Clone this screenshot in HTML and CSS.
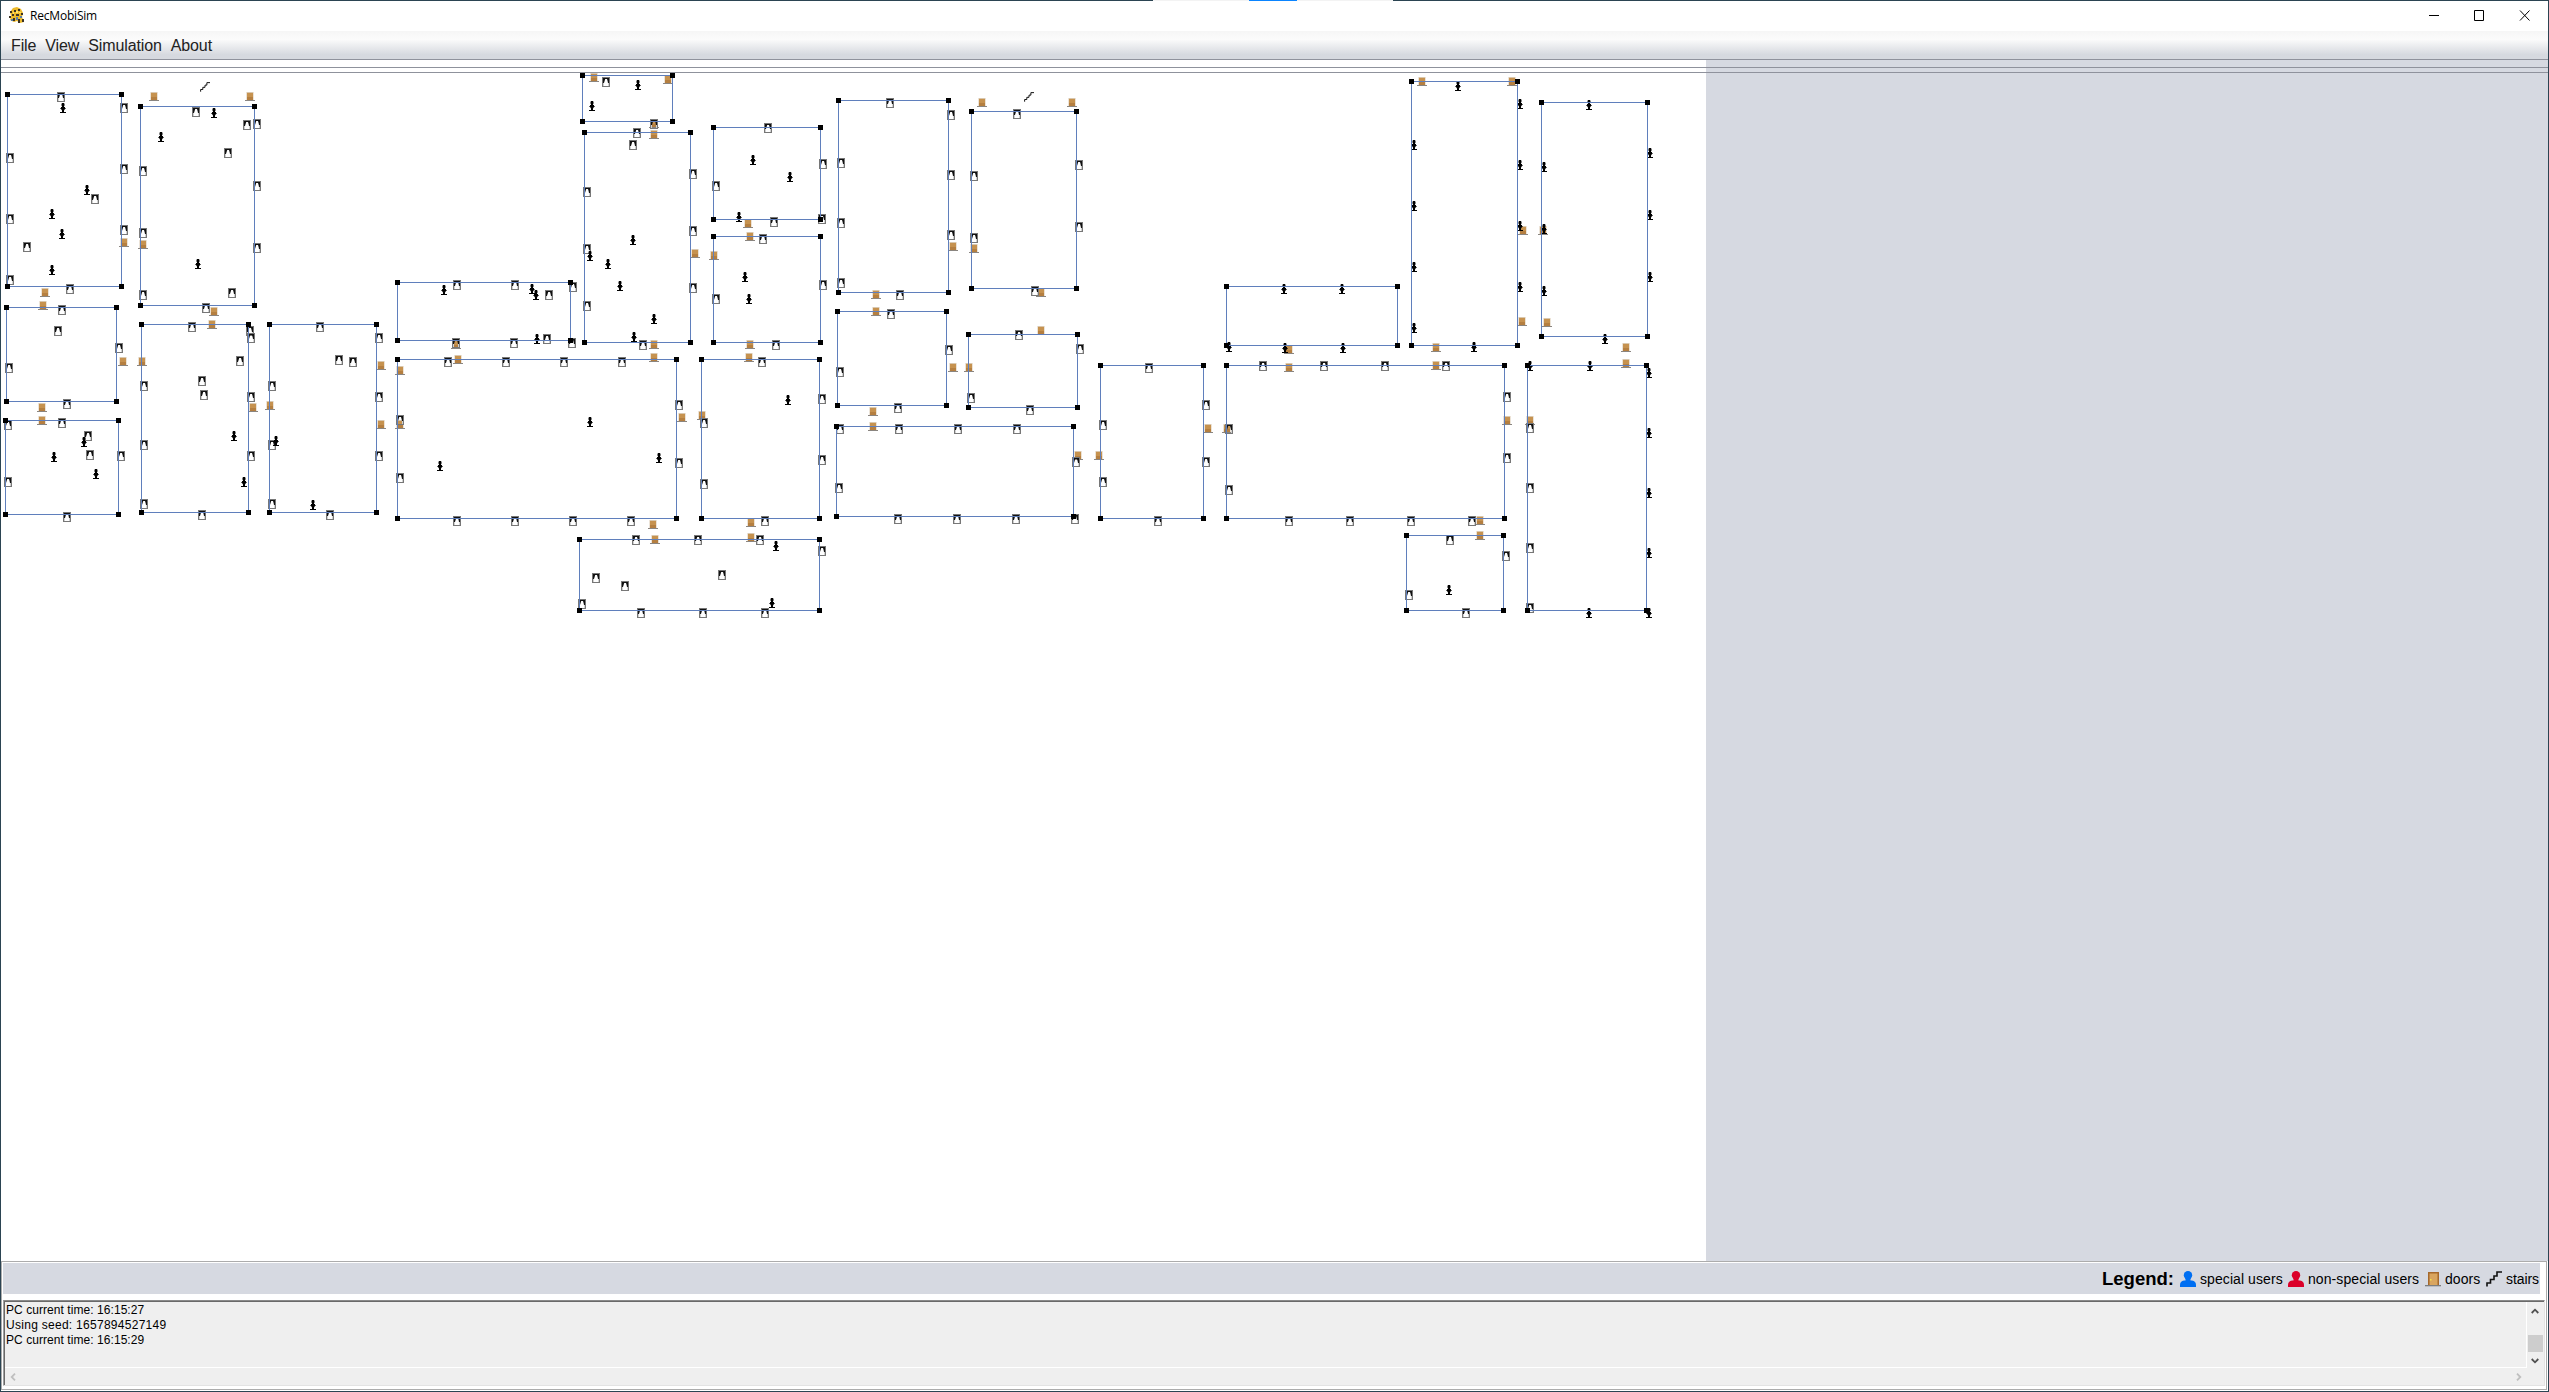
FILE: index.html
```html
<!DOCTYPE html>
<html lang="en">
<head>
<meta charset="utf-8">
<title>RecMobiSim</title>
<link rel="stylesheet" href="styles.css">
</head>
<body>
<svg class="defs" width="0" height="0">
  <symbol id="item" viewBox="0 0 8 10">
    <path fill="#d0d0d0" d="M1 1h1v8H1zM6 1h1v8H6z"/>
    <path fill="#777" fill-rule="evenodd" d="M0 0h8v10H0zM1 1v8h6V1z"/>
    <path fill="#111" d="M1 1h6v5H6L5.6 4 5 2H3.200L2.600 4 2 6H1z"/>
  </symbol>
  <symbol id="pawn" viewBox="0 0 6 10">
    <path d="M2 0h2l.5 1v1.500L4 3.500v.5h1v1h.6v1H5l-1 1.500V9h2v1H0V9h2V7.500L1 6H.4V5H1V4h1v-.5l-.5-1V1z"/>
  </symbol>
  <symbol id="door" viewBox="0 0 10 9">
    <path fill="#d9c7ae" d="M1.500 0h7v8h-7z"/>
    <path fill="#c6924f" d="M2 1h6v7H2z"/>
    <path fill="#b57f40" d="M2 5h6v3H2z"/>
    <path fill="#8a8580" d="M0 8h10v1H0z"/>
  </symbol>
  <symbol id="stairs" viewBox="0 0 16 16">
    <path fill="none" stroke="#111" stroke-width="1.600" d="M1 15.500V12h3.500V8.500H8V5h3V1h5"/>
  </symbol>
  <symbol id="user" viewBox="0 0 16 16">
    <circle cx="8" cy="4.200" r="4.200"/>
    <path d="M0 16v-2q0-4 4-4.600h8q4 .6 4 4.600v2zM5.500 7h5v4h-5z"/>
  </symbol>
</svg>
<div class="window">
  <header class="titlebar">
    <svg class="app-icon" viewBox="0 0 16 16">
      <path fill="#ecb92a" d="M4 1l4-1 4 2 2 4-1 4 2 5-4 1-3-2-3 1-4-2 1-4-1-4z"/>
      <path fill="#3a3226" d="M1 4h2v2H1zM5 3h2v2H5zM9 2h2v2H9zM3 7h2v2H3zM0 9h2v2H0zM7 7h3v2H7zM12 6h2v2h-2zM4 11h2v3H4zM9 12h2v4H9zM13 12h2v3h-2z"/>
      <path fill="#5b7fa8" d="M7 10h2v3H7zM2 12h2v2H2zM11 9h2v2h-2z"/>
      <path fill="#ffe36b" d="M7 4h2v2H7zM4 5h1v2H4zM10 5h2v1h-2z"/>
    </svg>
    <span class="app-title">RecMobiSim</span>
    <svg class="win-buttons" viewBox="0 0 102 12">
      <path fill="none" stroke="#000" d="M0 5.500h10M45.500 .5h9v10h-9zM91 .5l9.500 10M100.500 .5L91 10.500"/>
    </svg>
  </header>
  <nav class="menubar">
    <span>File</span><span>View</span><span>Simulation</span><span>About</span>
  </nav>
  <main class="workspace">
    <div class="toolbar"></div>
    <svg class="plan" id="plan" viewBox="1 71 1705 1190" width="1705" height="1190"></svg>
  </main>
  <section class="bottom">
    <div class="legend">
      <b>Legend:</b>
      <svg class="blue"><use href="#user"/></svg><span class="special">special users</span>
      <svg class="red"><use href="#user"/></svg><span class="regular">non-special users</span>
      <svg viewBox="0 0 16 16">
        <path fill="#a5682b" d="M3 1h11v13H3z"/><path fill="#d9a55f" d="M4.500 2.500h8V14h-8z"/>
        <path fill="#f5e34a" d="M5 8h1.500v1.500H5z"/><path fill="#7d7d7d" d="M0 14h16v1.300H0z"/>
      </svg><span class="exits">doors</span>
      <svg><use href="#stairs"/></svg><span class="steps">stairs</span>
    </div>
    <div class="console">
      <div class="log">
        <p>PC current time: 16:15:27</p>
        <p class="seed">Using seed: 1657894527149</p>
        <p>PC current time: 16:15:29</p>
      </div>
      <div class="vscroll">
        <svg viewBox="0 0 8 6"><path d="M.7 5L4 1.700 7.300 5"/></svg>
        <i class="thumb"></i>
        <svg viewBox="0 0 8 6"><path d="M.7 1L4 4.300 7.300 1"/></svg>
      </div>
      <div class="hscroll">
        <svg viewBox="0 0 6 8"><path d="M5 .7L1.700 4 5 7.300"/></svg>
        <svg viewBox="0 0 6 8"><path d="M1 .7L4.300 4 1 7.300"/></svg>
      </div>
      <div class="corner"></div>
    </div>
  </section>
</div>
<div class="tab-strip"><i></i></div>
<script src="script.js"></script>
</body>
</html>
```
FILE: styles.css
```css
* { box-sizing: border-box; }
html { height: 1392px; overflow: hidden; }
body {
  margin: 0;
  width: 2549px;
  height: 1392px;
  overflow: hidden;
  font-family: "Liberation Sans", Arial, sans-serif;
  color: #000;
}
.defs { position: absolute; }
.window {
  width: 2549px;
  height: 1392px;
  border: 1px solid #2b4452;
  background: #fff;
  display: flex;
  flex-direction: column;
}
.tab-strip {
  position: absolute;
  top: 0;
  left: 1153px;
  width: 240px;
  height: 1px;
  background: #f3f3f3;
  display: flex;
  justify-content: center;
}
.tab-strip i { width: 48px; background: #0a84ff; }

.titlebar {
  height: 30px;
  display: flex;
  align-items: center;
  padding: 0 17px 2px 8px;
}
.app-icon { width: 16px; height: 16px; margin-right: 5px; }
.app-title { font: 12px "Open Sans", "Noto Sans", sans-serif; letter-spacing: -0.2px; }
.win-buttons { width: 102px; height: 12px; margin: 2px 0 0 auto; }

.menubar {
  height: 29px;
  border-bottom: 1px solid #8f929c;
  background: linear-gradient(#f6f6f6, #fbfbfb 30%, #d6d9df 85%, #d6d9df);
  display: flex;
  gap: 9px;
  padding-left: 10px;
  font-size: 16px;
  line-height: 29px;
  letter-spacing: -0.12px;
  color: #222;
}

.workspace {
  height: 1201px;
  background: linear-gradient(90deg, #fff 1705px, #d6d9e1 1705px);
}
.toolbar {
  height: 11px;
  padding-top: 7px;
}
.toolbar::before {
  content: "";
  display: block;
  height: 4px;
  border: solid #8f929c;
  border-width: 1px 0;
}
.plan { display: block; }
.plan .room { fill: none; stroke: #5f7fbc; }
.plan .handle { fill: #000; }

.bottom {
  flex: 1;
  min-height: 0;
  margin: 0 1px 1px 0;
  border: 1px solid #acacac;
  padding: 1px 1px 3px;
  display: flex;
  flex-direction: column;
}
.legend {
  height: 31px;
  margin-right: 5px;
  background: #d6d9e1;
  display: flex;
  align-items: center;
  justify-content: flex-end;
  font-size: 14px;
  letter-spacing: 0.08px;
  white-space: nowrap;
}
.legend b { width: 78px; font-size: 18.500px; letter-spacing: 0; }
.legend svg { width: 16px; height: 16px; margin-right: 4px; }
.special { width: 88px; }
.regular { width: 117px; }
.exits { width: 41px; }
.steps { width: 34px; letter-spacing: -0.1px; }
.blue { fill: #006ff2; }
.red { fill: #db0029; }

.console {
  flex: 1;
  margin-top: 6px;
  background: #efefef;
  border: 1px solid #a0a0a0;
  border-top-color: #8a8a8a;
  border-right-color: #e3e3e3;
  border-bottom-color: #e3e3e3;
  box-shadow: inset 1px 1px #696969;
  display: grid;
  grid-template-columns: 1fr 17px;
  grid-template-rows: 1fr 17px;
  padding: 1px 0 0 1px;
}
.log {
  border: solid #fff;
  border-width: 0 1px 1px 0;
  padding: 1px 0 0 1px;
  font-size: 12px;
}
.log p { margin: 0; line-height: 15px; letter-spacing: 0.06px; }
.log .seed { letter-spacing: 0.28px; }
.console svg { fill: none; stroke: #505050; stroke-width: 1.800; }
.vscroll {
  display: flex;
  flex-direction: column;
  align-items: center;
  padding: 6px 1px 4px 0;
}
.vscroll svg { width: 8px; height: 6px; }
.thumb { width: 15px; height: 17px; margin: auto 0 6px; background: #cdcdcd; }
.hscroll {
  display: flex;
  justify-content: space-between;
  align-items: center;
  padding: 0 5px;
}
.hscroll svg { width: 6px; height: 8px; stroke: #bfbfbf; }
```
FILE: script.js
```javascript
// Rooms as [left, top, right, bottom]
const rooms = [
  [7,94,121,286],[140,106,254,305],[6,307,116,401],[5,420,118,514],[141,324,248,512],
  [269,324,376,512],[397,282,570,340],[397,359,676,518],[701,359,819,518],[579,539,819,610],
  [582,75,672,121],[584,132,690,342],[713,127,820,219],[713,236,820,342],[838,100,948,292],
  [971,111,1076,288],[837,311,946,405],[968,334,1077,407],[836,426,1073,516],[1100,365,1203,518],
  [1226,286,1397,345],[1226,365,1504,518],[1406,535,1503,610],[1411,81,1517,345],
  [1541,102,1647,336],[1527,365,1646,610]
];

// Centre points of everything placed on the floor plan
const doors = [
  [154,97],[250,97],[124,243],[143,245],[45,293],[43,306],[214,312],[212,325],[123,362],[142,362],
  [42,408],[42,421],[253,408],[270,406],[381,366],[381,425],[456,345],[458,360],[400,371],[400,425],
  [654,345],[654,358],[682,418],[702,416],[750,345],[749,358],[653,525],[655,540],[751,523],[751,538],
  [594,78],[668,80],[654,124],[654,135],[695,254],[714,256],[748,224],[750,237],[982,103],[1072,103],
  [953,247],[974,249],[876,295],[876,312],[1041,293],[1041,331],[953,368],[969,368],[873,412],[873,427],
  [1078,456],[1099,456],[1208,429],[1227,429],[1289,350],[1289,368],[1436,348],[1436,366],[1507,421],
  [1480,521],[1480,536],[1522,322],[1422,82],[1512,82],[1523,231],[1543,231],[1547,323],[1626,348],
  [1626,364],[1530,421]
];
const items = [
  [61,97],[124,108],[10,158],[124,169],[95,199],[10,219],[124,230],[27,247],[10,280],[70,289],
  [196,112],[247,125],[257,124],[228,153],[143,171],[257,186],[143,233],[257,248],[143,295],[232,293],
  [206,308],[62,310],[58,331],[119,348],[9,368],[67,404],[8,425],[62,423],[88,436],[90,455],[121,456],
  [8,482],[67,517],[192,327],[250,331],[251,338],[240,361],[202,381],[204,395],[144,386],[251,397],
  [144,445],[251,456],[144,504],[202,515],[320,327],[379,338],[339,360],[353,362],[272,386],[379,397],
  [272,445],[379,456],[272,504],[330,515],[457,285],[515,285],[549,295],[573,287],[456,343],[514,343],
  [547,339],[572,343],[448,362],[506,362],[564,362],[622,362],[400,420],[400,478],[679,405],[679,463],
  [457,521],[515,521],[573,521],[631,521],[762,362],[822,399],[704,423],[822,460],[704,484],[765,521],
  [636,540],[698,540],[760,540],[822,551],[596,578],[625,586],[722,575],[582,604],[641,613],[703,613],
  [765,613],[606,82],[654,124],[637,133],[633,145],[693,174],[587,192],[693,231],[587,249],[693,288],
  [587,306],[643,345],[768,128],[823,164],[716,186],[822,219],[774,222],[763,239],[823,285],[716,299],
  [776,345],[890,103],[951,115],[841,163],[951,175],[841,223],[951,235],[841,283],[900,295],[1017,114],
  [974,176],[1079,165],[974,238],[1079,227],[1035,291],[891,314],[949,350],[840,372],[898,408],
  [1019,335],[1080,349],[971,398],[1030,410],[840,429],[899,429],[958,429],[1017,429],[1076,462],
  [839,488],[898,519],[957,519],[1016,519],[1075,519],[1149,368],[1103,425],[1206,405],[1206,462],
  [1103,482],[1158,521],[1229,429],[1229,490],[1263,366],[1324,366],[1385,366],[1446,366],[1507,397],
  [1507,458],[1289,521],[1350,521],[1411,521],[1472,521],[1450,540],[1506,556],[1409,595],[1466,613],
  [1530,428],[1530,488],[1530,548],[1530,608]
];
const pawns = [
  [63,108],[214,113],[161,137],[87,190],[52,214],[62,234],[52,270],[198,264],[84,442],[54,457],
  [96,474],[234,436],[244,482],[276,441],[313,505],[444,290],[532,289],[536,295],[537,339],[590,422],
  [440,466],[659,458],[788,400],[776,546],[772,603],[638,85],[592,106],[633,240],[590,256],[608,264],
  [620,286],[654,319],[634,337],[753,160],[790,177],[739,217],[745,277],[749,299],[1284,289],
  [1342,289],[1229,347],[1285,348],[1343,348],[1449,590],[1458,86],[1520,104],[1414,145],[1520,165],
  [1414,206],[1520,226],[1414,267],[1520,287],[1414,328],[1474,347],[1589,105],[1544,167],[1650,153],
  [1544,229],[1650,215],[1544,291],[1650,277],[1605,339],[1530,366],[1590,366],[1649,373],[1649,433],
  [1649,493],[1649,553],[1589,613],[1649,613]
];
const stairs = [[205,87],[1029,97]];

const place = (id, w, h, points) => points.map(([x, y]) =>
  `<use href="#${id}" x="${x - w / 2}" y="${y - Math.ceil(h / 2)}" width="${w}" height="${h}"/>`).join("");

const room = ([l, t, r, b]) =>
  `<rect class="room" x="${l + 0.5}" y="${t + 0.5}" width="${r - l}" height="${b - t}"/>` +
  [[l, t], [r, t], [l, b], [r, b]].map(([x, y]) =>
    `<rect class="handle" x="${x - 2}" y="${y - 2}" width="5" height="5"/>`).join("");

document.getElementById("plan").innerHTML =
  place("door", 10, 9, doors) + place("item", 8, 10, items) + place("pawn", 6, 10, pawns) +
  place("stairs", 10, 10, stairs) + rooms.map(room).join("");
```
